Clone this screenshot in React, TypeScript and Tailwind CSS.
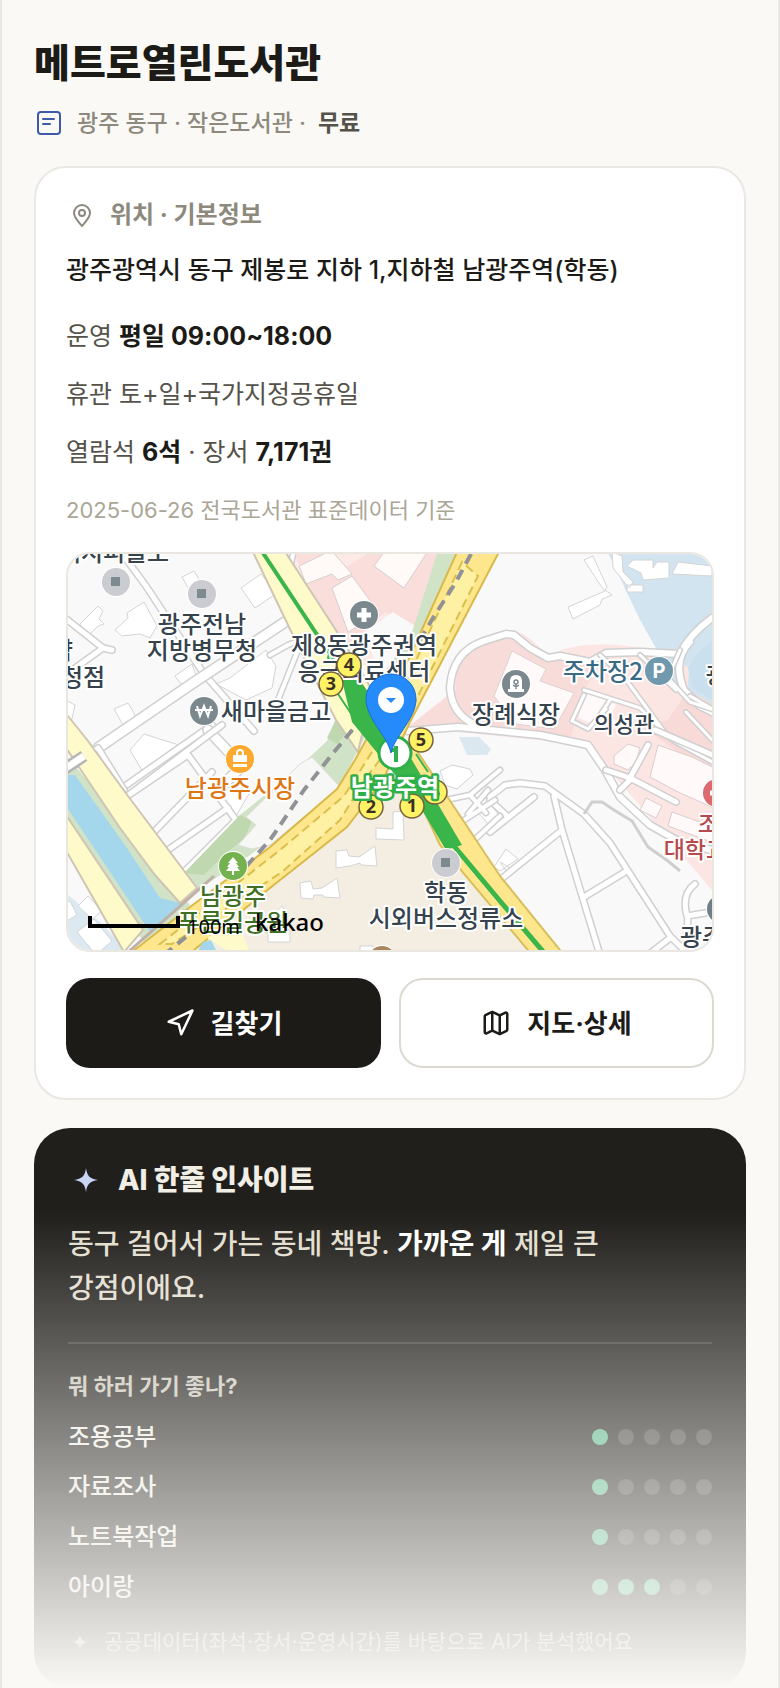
import type { ReactNode } from "react";
import { Map, Navigation } from "lucide-react";

type Place = { x: number; y: number; text: string; color?: string; size?: number };

const PLACES: Place[] = [
	{ x: 114, y: 561, text: "엑지피물도" },
	{ x: 202, y: 633, text: "광주전남" },
	{ x: 202, y: 659, text: "지방병무청" },
	{ x: 62, y: 659, text: "약" },
	{ x: 72, y: 686, text: "구청점" },
	{ x: 276, y: 720, text: "새마을금고" },
	{ x: 364, y: 654, text: "제8동광주권역" },
	{ x: 364, y: 680, text: "응급의료센터" },
	{ x: 516, y: 723, text: "장례식장" },
	{ x: 603, y: 680, text: "주차장2", color: "#3a6a85" },
	{ x: 624, y: 732, text: "의성관", size: 22 },
	{ x: 726, y: 683, text: "광주", size: 22 },
	{ x: 240, y: 797, text: "남광주시장", color: "#e07516" },
	{ x: 233, y: 905, text: "남광주", color: "#3f6f24" },
	{ x: 233, y: 931, text: "푸른길공원", color: "#3f6f24" },
	{ x: 446, y: 901, text: "학동" },
	{ x: 446, y: 927, text: "시외버스정류소" },
	{ x: 719, y: 832, text: "조선", color: "#b54a4f", size: 23 },
	{ x: 706, y: 858, text: "대학교병", color: "#b54a4f", size: 23 },
	{ x: 702, y: 946, text: "광주", size: 24 },
];

const EXITS = [
	{ x: 331, y: 684, no: 3 },
	{ x: 349, y: 665, no: 4 },
	{ x: 421, y: 740, no: 5 },
	{ x: 435, y: 792, no: 6 },
	{ x: 371, y: 807, no: 2 },
	{ x: 412, y: 806, no: 1 },
];

const RATINGS = [
	{ label: "조용공부", score: 1 },
	{ label: "자료조사", score: 1 },
	{ label: "노트북작업", score: 1 },
	{ label: "아이랑", score: 3 },
];

// white streets with a thin grey casing
const Streets = ({ d, width = 5 }: { d: string; width?: number }) => (
	<g fill="none" strokeLinejoin="round" strokeLinecap="round">
		<path d={d} stroke="#d0d0d0" strokeWidth={width + 3} />
		<path d={d} stroke="#ffffff" strokeWidth={width} />
	</g>
);

const PoiDot = ({ x, y, fill, children }: { x: number; y: number; fill: string; children?: ReactNode }) => (
	<g transform={`translate(${x} ${y})`}>
		<circle r="15" fill="#ffffff" />
		<circle r="14" fill={fill} />
		{children}
	</g>
);

const Sparkle = ({ className }: { className?: string }) => (
	<svg viewBox="0 0 24 24" className={className} fill="currentColor" aria-hidden="true">
		<path d="M12 0c1 8 4 11 12 12-8 1-11 4-12 12-1-8-4-11-12-12 8-1 11-4 12-12Z" />
	</svg>
);

const LibraryMap = () => (
	<svg
		viewBox="68 554 644 396"
		preserveAspectRatio="xMidYMid slice"
		className="block h-[396px] w-full"
		role="img"
		aria-label="남광주역 주변 지도"
	>
		<rect x="0" y="500" width="800" height="500" fill="#f9f9f9" />

		{/* areas */}
		<path d="M286 550H446L430 590 412 636 370 672 341 640Z" fill="#fde9e6" />
		<path d="M292 550H322L345 568 373 550H442L428 600 415 628 385 612 350 645 322 612Z" fill="#f9dedc" />
		<path d="M299 566L320 556 331 550 352 574 338 580 332 574 306 584ZM332 588l20-12 22 30-18 8 6 10-14 8ZM374 566l22-30 34 12-26 40Z" fill="#fff9f7" stroke="#d6cfce" />
		<path d="M365 632l28-20 22 14-14 30-26 6Z" fill="#f9f9f9" />
		<path d="M608 553H720V710L690 700 684 668 657 650 640 620Z" fill="#d2e4f0" />
		<path d="M454 690C446 662 480 632 510 630C530 632 542 654 552 654C575 640 640 642 664 656L690 668C682 700 700 706 716 712V895L640 806 588 745 408 727Z" fill="#fce6e4" />
		<path d="M456 690C452 660 480 634 510 633C530 638 540 656 560 660L600 664 584 690 570 742 500 733 408 727Z" fill="#f8dcda" />
		<path d="M668 720l20-30 28 16v70l-44-28-34-24Z" fill="#f8dad8" />
		<path d="M688 668q10-20 28-30v64l-24-14Z" fill="#cbe0ee" />
		<path d="M658 655l26 2-6 30-12-12Z" fill="#d2e4f0" />
		<path d="M512 651l34 18-6 12 34 12-20 36-38-5-22-28Z" fill="#fffaf9" stroke="#dcd2d2" />
		<path d="M581 704l8-12 27 13-7 14 8 2-8 12-30-15Z" fill="#fffaf9" />
		<path d="M459 737h20l12 12-4 6h-20ZM680 740" fill="#dbe8f0" />
		<path d="M658 745l34 12 24 12v40l-40-18-26-14Z" fill="#fffaf9" stroke="#d8cdcd" />
		<path d="M646 798l16 8-6 12-16-8ZM672 812l50 18v16l-54-20Z" fill="#fffaf9" stroke="#d8cdcd" />
		<path d="M614 756l14-12 12 4-4 14-8 8-14-6Z" fill="#fffaf9" stroke="#d8cdcd" />
		<path d="M398 765L347 827 270 888 190 952H536Z" fill="#f4ede2" />
		<path d="M60 888L100 922 132 955H60Z" fill="#dce9f1" />
		<path d="M77 932l17-13 18 22-16 14ZM78 906l10-10 14 15-10 8ZM62 905l8-4 7 14-12 7Z" fill="#ffffff" stroke="#cfd5d8" />

		{/* buildings */}
		<g fill="#ffffff" stroke="#d4d4d4">
			<path d="M80 624l18-18 5 5-4 8 5 5-6 2-12 12ZM115 630l13-12-1-5 17-11 13 24-7 12-10-4-18 2ZM182 577l12-6 6 10-10 10ZM241 588l20-14 16 19-22 15Z" />
			<path d="M175 676l17-12 6 18-17 2ZM114 709l14-6 6 10 1 6-12 6ZM216 684l14-6 36-28 10 16-4 22-26 12ZM60 697l15 8-3 14-10 3Z" />
			<path d="M584 560l9-4 14 31-2 3 7 5-10 4-2 6-27 14-5-12 37-16-4-5Z" />
			<path d="M612 552l10 4 1 16 10 10-4 6-16-20ZM627 566l6-6h20v8l4-6h12v16l-26 2-2-7ZM678 562l34 4v10l-40-2ZM627 585h16v7h-16Z" />
			<path d="M376 828l17 1v-17l10-1 1 29-28-1ZM336 851l11-1 2 6 10 1 16-11 2 20-16-1-1-2-10 3-14 2ZM300 883l11-2 2 8 9-1 15-10 3 20-17-1v-2h-9l-1 4-12-1ZM270 918l12-12 4 6-8 9 2 10-14 2ZM268 930h22v12h-22Z" />
			<path d="M440 771l12-6 18 4 3 6-16 14-12-4ZM476 810l14-6 10 12-10 10ZM500 862l10 6 8-6-8 14ZM494 867l12-18 12 10-18 12Z" />
			<path d="M130 750l14-16 38 12-38 28ZM360 946h13l1 6h-14ZM210 790l18-10 22 12-14 24Z" />
		</g>

		{/* minor streets */}
		<Streets d="M118 548L146 586 204 674M60 614L103 648 112 650M103 648L64 676M204 674l50 57M212 725L98 805" width={5} />
		<Streets d="M208 730l34 36-24 24M98 748L190 685 300 612" width={9} />
		<Streets d="M98 748l26 42M126 797L222 725M126 797L188 755 236 820 183 873M150 836L212 772M165 852L228 808M94 750L60 776" />
		<Streets d="M293 554Q286 582 303 587L320 612 328 628 288 645 270 655M300 645L278 700" width={4} />
		<Streets d="M408 731L458 727 540 735 588 745 605 770 620 797 650 825 680 842 712 850M712 618Q690 634 680 654L640 652 606 653 590 662 560 656 548 658 530 648 514 635 506 634 484 641 Q452 652 450 688Q452 714 474 724M690 642Q672 660 684 690L700 706 716 714" width={6} />
		<Streets d="M680 650l-12 28 22 24 24 8M600 655l24 22 44 60M640 655l36 35M584 690l56 18 32 32 44 24M584 695l-12 26 16 8 18-20M610 700l-12 18M686 712l28 30M690 696l24 14" width={3} />
		<Streets d="M648 745L630 778 606 770M630 778l46 24M620 790l12-12M655 730l60 26" />
		<Streets d="M490 797L505 785 520 783 545 786 584 814 610 843 670 936 684 950M554 796L562 830 600 955M584 897L625 872M562 830L500 880M534 797L490 832M490 800l18 17M648 955l22-17M695 884q-14 10-8 32l18-3M688 916l-2 30" />
		<Streets d="M446 800L470 795 500 770M455 826l40-26M468 846l32-30M488 790l-20 24M470 795l16 18" width={4} />
		<path d="M584 814l8-12h10l12 8 18 11 16 26 20 14 12 10" fill="none" stroke="#cfcfcf" strokeWidth="3" />

		{/* park strip */}
		<path d="M350 680L337 718 327 741 296 770 240 815 183 875 198 890 250 855 340 785 366 735Z" fill="#d1e3c6" />
		<path d="M345 700l-18 38 10 6 20-24ZM240 815l12 6-8 18-18 14-22 22-20-2Z" fill="#bfd8b0" />
		<path d="M300 764l12-7 28 30-70 58-18 4-14-4 18-20-10-8Z" fill="#f7f8f5" stroke="#dcdcd8" />
		<path d="M438 550H460L420 638 405 660 372 690 412 632 428 582Z" fill="#d1e3c6" />

		{/* river */}
		<path d="M66 755L95 790 190 905 150 950 60 830Z" fill="#d1e3c6" />
		<path d="M66 775L75 775 127 848 160 898 185 904 150 932 66 806Z" fill="#a4d6ec" />
		<path d="M60 706L88 741 128 796 197 888 180 903 155 875 120 828 62 742ZM60 806L143 930 124 952 60 840Z" fill="#fffac9" stroke="#cfc5b4" strokeWidth="2" />
		<path d="M60 772l24-16" stroke="#b5b5b5" strokeWidth="12" />
		<path d="M60 772l24-16" stroke="#ffffff" strokeWidth="7" />

		{/* main roads */}
		<path d="M252 550H284L341 638 372 690 358 752 336 720 300 650Z" fill="#fffac9" stroke="#cfc5b4" strokeWidth="2" />
		<path d="M396 752L415 748 500 876 564 955H532L440 845Z" fill="#fee68c" stroke="#d8bf5c" strokeWidth="2" />
		<path d="M458 550L400 678 355 760 337 789 270 847 190 907 128 955H188L270 888 347 827 383 780 410 722 500 550Z" fill="#fee68c" stroke="#d8b94a" strokeWidth="2" />
		<path d="M462 562L404 686 372 752 344 796 280 850 160 944H172L282 872 340 820 366 778 398 736 478 576Z" fill="#fff1a4" stroke="#d9bf4e" strokeWidth="2" strokeDasharray="9 5" />
		<path d="M207 938l28-20 16 36h-18Z" fill="#fffac9" />
		<path d="M203 942l8-2 7 14h-22Z" fill="#a4d6ec" />
		<path d="M125 955L214 876" stroke="#bfb1a6" strokeWidth="3" />
		<path d="M471 554L456 582 433 618 420 640" stroke="#909296" strokeWidth="4" strokeDasharray="11 7" fill="none" />
		<path d="M364 716L334 752 304 790 270 840 232 882M186 937L160 958" stroke="#909296" strokeWidth="4" strokeDasharray="11 7" fill="none" />

		{/* subway */}
		<path d="M261 550L318 636 346 676" stroke="#39b54a" strokeWidth="4" fill="none" />
		<path d="M342 680H360L372 698 396 742 412 760 462 845 446 850 422 810 396 776 352 722Z" fill="#39b54a" />
		<path d="M338 694l12 18 6-6M330 650l-2 8 10 10M416 754l12 18" fill="none" stroke="#39b54a" strokeWidth="2" />
		<path d="M454 846L500 901 546 955" stroke="#39b54a" strokeWidth="5" fill="none" />

		<PoiDot x={116} y={582} fill="#cbccd1">
			<rect x="-5" y="-5" width="9" height="9" fill="#7d8b91" />
		</PoiDot>
		<PoiDot x={202} y={594} fill="#cbccd1">
			<rect x="-5" y="-5" width="9" height="9" fill="#7d8b91" />
		</PoiDot>
		<PoiDot x={446} y={863} fill="#cbccd1">
			<rect x="-5" y="-5" width="9" height="9" fill="#7d8b91" />
		</PoiDot>
		<PoiDot x={204} y={711} fill="#7b898f">
			<path d="M-7-5l3 10L0-5l4 10 3-10M-9-1H9" fill="none" stroke="#fff" strokeWidth="2" />
		</PoiDot>
		<PoiDot x={364} y={615} fill="#7b898f">
			<path d="M-7 0H7M0-7V7" stroke="#fff" strokeWidth="5" />
		</PoiDot>
		<PoiDot x={516} y={684} fill="#7b898f">
			<path d="M-8 8V5h2v-8q0-6 6-6t6 6v8h2v3Z" fill="#fff" />
			<path d="M0 0v5M-3 1l3 2 3-2" stroke="#7b898f" fill="none" strokeWidth="1.5" />
			<circle cy="-2" r="2" fill="none" stroke="#7b898f" strokeWidth="1.5" />
		</PoiDot>
		<PoiDot x={659} y={671} fill="#7199ad">
			<text y="7" textAnchor="middle" fill="#fff" fontSize="20" fontWeight="700">P</text>
		</PoiDot>
		<PoiDot x={240} y={759} fill="#fda930">
			<path d="M-7-4H7V3H-7ZM-7 5H7V8H-7Z" fill="#fff" />
			<path d="M-3-4v-2q0-3 3-3t3 3v2" fill="none" stroke="#fff" strokeWidth="2" />
		</PoiDot>
		<PoiDot x={233} y={866} fill="#74b14f">
			<path d="M0-9L5-3H3L6 1H4L7 5H1V9H-1V5H-7L-4 1H-6L-3-3H-5Z" fill="#fff" />
		</PoiDot>
		<PoiDot x={717} y={793} fill="#dd6a70">
			<path d="M-7 0H5" stroke="#fff" strokeWidth="5" />
		</PoiDot>
		<PoiDot x={721} y={909} fill="#6f7f87" />
		<PoiDot x={382} y={960} fill="#a9875f" />

		<g fontFamily="'Noto Sans CJK KR', sans-serif" fontWeight="500" textAnchor="middle" stroke="#ffffff" strokeWidth="4" strokeLinejoin="round" paintOrder="stroke">
			{PLACES.map(({ x, y, text, color = "#36434d", size = 24 }) => (
				<text key={`${text}-${y}`} x={x} y={y} fontSize={size} fill={color}>
					{text}
				</text>
			))}
		</g>

		<circle cx="395" cy="753" r="16" fill="#fff" stroke="#2faf49" strokeWidth="3" />
		<path d="M396 746v16M391 750h5" stroke="#2faf49" strokeWidth="4" />

		<g fontFamily="'Open Sans', sans-serif" fontWeight="700" fontSize="18" textAnchor="middle">
			{EXITS.map(({ x, y, no }) => (
				<g key={no}>
					<circle cx={x} cy={y} r="12" fill="#fff265" stroke="#76613c" strokeWidth="1.5" />
					<text x={x} y={y + 6} fill="#3b2f22">
						{no}
					</text>
				</g>
			))}
		</g>
		<text x="395" y="796" textAnchor="middle" fontFamily="'Noto Sans CJK KR', sans-serif" fontSize="24" fontWeight="700" fill="#fff" stroke="#2faf49" strokeWidth="5" strokeLinejoin="round" paintOrder="stroke">
			남광주역
		</text>

		<path d="M391 753C387 735 366 719 366 699a25 25 0 0 1 50 0C416 719 395 735 391 753Z" fill="#258bfa" stroke="#1670d8" />
		<circle cx="391" cy="700" r="13" fill="#fff" />
		<path d="M386 698h10l-5 5Z" fill="#258bfa" />

		<path d="M90 916v10h88v-10" fill="none" stroke="#000" strokeWidth="4" />
		<text x="187" y="934" fontFamily="'Noto Sans', sans-serif" fontSize="20" fill="#000">100m</text>
		<text x="255" y="931" fontFamily="'Noto Sans', sans-serif" fontSize="24" fontWeight="500" fill="#000">kakao</text>
	</svg>
);

const RatingRow = ({ label, score }: { label: string; score: number }) => (
	<li className="flex h-[50px] items-center justify-between">
		<span>{label}</span>
		<span className="flex gap-[10px]" role="img" aria-label={`5점 중 ${score}점`}>
			{[1, 2, 3, 4, 5].map((n) => (
				<span
					key={n}
					className={n <= score ? "size-4 rounded-full bg-[#57b889]" : "size-4 rounded-full bg-white/16"}
				/>
			))}
		</span>
	</li>
);

export default function App() {
	return (
		<main className="relative min-h-screen border-x-2 border-[#eae8e2] bg-[#faf9f6] px-8 pt-9 font-['Inter','Noto_Sans_CJK_KR',sans-serif] text-[#1c1b17]">
			<header>
				<h1 className="text-[39px] leading-[54px] font-extrabold">메트로열린도서관</h1>
				<p className="mt-4 flex h-[34px] items-center text-[23px] font-medium text-[#8d897d]">
					<svg viewBox="0 0 24 24" className="mr-4 ml-[3px] size-6 text-[#3e5baa]" fill="none" stroke="currentColor" strokeWidth="2" strokeLinecap="round" aria-hidden="true">
						<rect x="1" y="1" width="22" height="22" rx="3" />
						<path d="M6 8h11M6 13h7" />
					</svg>
					광주 동구 · 작은도서관 ·<b className="ml-3 font-bold text-[#55524a]">무료</b>
				</p>
			</header>

			<section className="mt-[26px] rounded-[32px] border-2 border-[#eae8e2] bg-white px-[30px] pt-[30px] pb-[30px]">
				<h2 className="flex h-[34px] items-center text-[24px] font-bold text-[#8d897d]">
					<svg viewBox="0 0 24 24" className="mx-1 mr-4 size-6" fill="none" stroke="currentColor" strokeWidth="2" aria-hidden="true">
						<path d="M12 23C8 18 4 14.500 4 10a8 8 0 0 1 16 0c0 4.500-4 8-8 13Z" />
						<circle cx="12" cy="10" r="3" />
					</svg>
					위치 · 기본정보
				</h2>
				<p className="mt-[18px] text-[25px] leading-[40px] font-medium">광주광역시 동구 제봉로 지하 1,지하철 남광주역(학동)</p>
				<div className="mt-[26px] flex flex-col gap-[18px] text-[25px] leading-[40px] text-[#55524a]">
					<p>
						운영 <b className="font-bold text-[#1c1b17]">평일 09:00~18:00</b>
					</p>
					<p>휴관 토+일+국가지정공휴일</p>
					<p>
						열람석 <b className="font-bold text-[#1c1b17]">6석</b> · 장서 <b className="font-bold text-[#1c1b17]">7,171권</b>
					</p>
				</div>
				<p className="mt-5 text-[22px] leading-[36px] text-[#aba697]">2025-06-26 전국도서관 표준데이터 기준</p>
				<div className="mt-6 overflow-hidden rounded-3xl border-2 border-[#eae6e0]">
					<LibraryMap />
				</div>
				<div className="mt-[26px] grid grid-cols-2 gap-[18px] text-[26px] font-bold">
					<button type="button" className="flex h-[90px] items-center justify-center gap-4 rounded-3xl bg-[#1c1b17] text-white">
						<Navigation size={30} strokeWidth={2} />
						길찾기
					</button>
					<button type="button" className="flex h-[90px] items-center justify-center gap-4 rounded-3xl border-2 border-[#dcd9d0] bg-white">
						<Map size={30} strokeWidth={2} />
						지도·상세
					</button>
				</div>
			</section>

			<section className="mt-7 rounded-[36px] bg-[#201f1b] px-[34px] pt-8 pb-7 text-[#f1eee6]">
				<h2 className="flex h-10 items-center text-[28px] font-extrabold">
					<Sparkle className="mx-1.5 mr-5 size-6 text-[#c9d5f5]" />
					AI 한줄 인사이트
				</h2>
				<p className="mt-[22px] max-w-[560px] text-[28px] leading-[44px] font-medium text-[#e2decf]">
					동구 걸어서 가는 동네 책방. <b className="font-bold text-white">가까운 게</b> 제일 큰 강점이에요.
				</p>
				<hr className="mt-8 border-t-2 border-white/12" />
				<h3 className="mt-6 text-[22px] leading-[36px] font-bold text-[#c9c5b8]">뭐 하러 가기 좋나?</h3>
				<ul className="mt-2 text-[24px] font-medium">
					{RATINGS.map((rating) => (
						<RatingRow key={rating.label} {...rating} />
					))}
				</ul>
				<p className="mt-3 flex h-9 items-center text-[21px] text-[#b5b1a5]">
					<Sparkle className="mx-1 mr-4 size-4" />
					공공데이터(좌석·장서·운영시간)를 바탕으로 AI가 분석했어요
				</p>
			</section>

			<div className="pointer-events-none absolute inset-x-0 bottom-0 h-[476px] bg-linear-to-b from-[#faf9f6]/0 to-[#faf9f6]" />
		</main>
	);
}
